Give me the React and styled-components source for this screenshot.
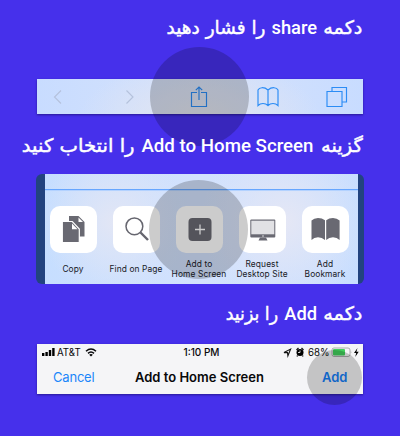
import React from "react";
import styled, { createGlobalStyle } from "styled-components";

const Global = createGlobalStyle`
  * { box-sizing: border-box; }
  body { margin: 0; background: #4630eb; }
`;

const Page = styled.main`
  display: flex;
  flex-direction: column;
  width: 400px;
  height: 436px;
  overflow: hidden;
  background: #4630eb;
  font-family: Inter, "Liberation Sans", sans-serif;
`;

const Heading = styled.h2`
  position: relative;
  z-index: 2;
  display: flex;
  justify-content: flex-start;
  align-items: center;
  direction: rtl;
  height: 30px;
  margin: ${(p) => p.$top}px 37px 0 0;
  color: #fff;
  font: 400 18.5px/30px "DejaVu Sans", sans-serif;
  white-space: nowrap;
`;

const Persian = styled.span`
  flex: none;
  display: flex;
  justify-content: center;
  width: ${(p) => p.$w}px;
  -webkit-text-stroke: 0.45px #fff;
`;

const Latin = styled.span`
  flex: none;
  display: flex;
  justify-content: center;
  width: ${(p) => p.$w}px;
  direction: ltr;
  margin: 0 6px;
  font: 500 18.7px/30px Roboto, sans-serif;
`;

const Stretch = styled.span`
  flex: none;
  transform: scaleX(${(p) => p.$by || 1});
`;

const Halo = styled.i`
  position: absolute;
  z-index: 1;
  left: ${(p) => p.$x}px;
  top: ${(p) => p.$y}px;
  width: ${(p) => p.$size}px;
  height: ${(p) => p.$size}px;
  border-radius: 50%;
  background: rgba(0, 0, 0, 0.2);
  pointer-events: none;
`;

const Toolbar = styled.section`
  position: relative;
  flex: none;
  display: flex;
  align-items: center;
  width: 326px;
  height: 35px;
  margin: 36px 0 0 37px;
  background:
    radial-gradient(ellipse 120px 50px at 50% 100%, #e2e5f0, rgba(226, 229, 240, 0)),
    linear-gradient(90deg, #c8dcff, #d6e2fb 50%, #c8dcff);
  box-shadow: 0 1px 2px rgba(20, 10, 90, 0.6);
`;

const ToolIcon = styled.svg`
  flex: none;
  width: 24px;
  height: 24px;
  margin-left: ${(p) => p.$gap}px;
  fill: none;
  stroke: ${(p) => (p.$muted ? "#b5c2dc" : "#2b8cf5")};
  stroke-width: 1.15;
`;

const Sheet = styled.section`
  position: relative;
  flex: none;
  width: 328px;
  height: 110px;
  margin: 13px 0 0 36px;
  padding: 0 6px 0 9px;
  border-radius: 6px;
  background: #22437f;
`;

const SheetBody = styled.div`
  height: 110px;
  padding-top: 15px;
  background:
    radial-gradient(circle 75px at 69px 48px, #e2e6f5, rgba(226, 230, 245, 0)),
    radial-gradient(circle 85px at 240px 48px, #e5e7f5, rgba(229, 231, 245, 0)),
    linear-gradient(90deg, #c6deff, #d3e2fd 50%, #c8deff);
`;

const Rule = styled.div`
  height: 1px;
  background: #66a6ff;
  box-shadow: 0 1px 0 #b3d2ff;
`;

const Actions = styled.div`
  display: grid;
  grid-template-columns: repeat(5, 63px);
  margin: 16px 0 0 -3.5px;
`;

const Action = styled.div`
  display: flex;
  flex-direction: column;
  align-items: center;
`;

const Tile = styled.div`
  display: flex;
  align-items: center;
  justify-content: center;
  width: 47px;
  height: 47px;
  border-radius: 10px;
  background: #fff;
`;

const Glyph = styled.svg`
  width: 47px;
  height: 47px;
  fill: #696972;
`;

const Label = styled.div`
  display: flex;
  align-items: center;
  height: 22px;
  margin-top: 5px;
  color: #17191f;
  font-size: 8.4px;
  line-height: 10.2px;
  letter-spacing: 0.1px;
  text-align: center;
  white-space: pre;
`;

const Dialog = styled.section`
  position: relative;
  flex: none;
  width: 326px;
  height: 50px;
  margin: 15px 0 0 37px;
  background: #f5f5f7;
  color: #08080a;
  box-shadow: 0 1px 2px rgba(20, 10, 90, 0.6);
`;

const StatusBar = styled.div`
  display: grid;
  grid-template-columns: 146.5px 99.5px 80px;
  height: 17px;
  font-size: 9.7px;
  line-height: 17px;
`;

const StatusIcons = styled.svg`
  flex: none;
  width: ${(p) => p.$w}px;
  height: 17px;
`;

const Carrier = styled.div`
  display: flex;
  padding-left: 5px;
  white-space: pre;
`;

const Clock = styled.div`
  font-size: 10px;
  font-weight: 500;
`;

const Battery = styled.div`
  display: flex;
`;

const NavBar = styled.div`
  display: grid;
  grid-template-columns: 98px 187px 41px;
  height: 33px;
  font-size: 13px;
  line-height: 33px;
  white-space: nowrap;
`;

const Cancel = styled.span`
  padding-left: 16px;
  color: #1b86fa;
  letter-spacing: -0.2px;
`;

const Title = styled.span`
  font-weight: 600;
`;

const Confirm = styled.span`
  color: #1580fa;
  font-weight: 600;
`;

const glyphs = {
  copy: (
    <>
      <path d="M20 10h8.5l6 6v14.5H19V10z" />
      <path d="M28.5 11.5V16H33z" fill="#fff" />
      <path d="M12.3 15.5h10l7 7.5v13.5h-17z" stroke="#fff" strokeWidth="1.2" />
      <path d="M22 17.5v5.7h5.5z" fill="#fff" />
    </>
  ),
  find: (
    <g fill="none" stroke="#66666f">
      <circle cx="21.4" cy="20.3" r="8.4" strokeWidth="1.5" />
      <path d="M27.5 26.5l7.5 7.5" strokeWidth="2.4" />
    </g>
  ),
  add: (
    <>
      <rect x="12.5" y="12" width="23" height="23" rx="4" />
      <path d="M24 18.5v10M19 23.5h10" stroke="#fff" strokeWidth="1.3" />
    </>
  ),
  desktop: (
    <>
      <rect x="11.3" y="13.5" width="25" height="18" rx="1" />
      <path d="M12.3 14.7h23v13.6h-23z" fill="#e1e1e4" />
      <path d="M21 31.5h6l1.5 3h-9z" />
      <circle cx="24" cy="30" r=".7" fill="#fff" />
    </>
  ),
  bookmark: (
    <path d="M9.5 14.5Q12 12 16 12t7 2.3V34Q20 31.3 16 31.3T9.5 34zM24.2 14.3Q27 12 31 12t6.6 2.5V34Q35 31.3 31 31.3T24.2 34z" />
  ),
};

const actions = [
  ["copy", "Copy"],
  ["find", "Find on Page"],
  ["add", "Add to\nHome Screen"],
  ["desktop", "Request\nDesktop Site"],
  ["bookmark", "Add\nBookmark"],
];

export default function App() {
  return (
    <>
      <Global />
      <Page>
        <Heading $top={13}>
          <Persian $w={40}><Stretch $by={1.04}>دکمه</Stretch></Persian>
          <Latin $w={46}><Stretch $by={0.98}>share</Stretch></Latin>
          <Persian $w={98}><Stretch>را فشار دهید</Stretch></Persian>
        </Heading>
        <Toolbar>
          <ToolIcon $gap={9} $muted viewBox="0 0 24 24"><path d="M15 5.5L8.5 12l6.5 6.5" /></ToolIcon>
          <ToolIcon $gap={48} $muted viewBox="0 0 24 24"><path d="M8.5 5.5L15 12l-6.5 6.5" /></ToolIcon>
          <ToolIcon $gap={45} viewBox="0 0 24 24">
            <path d="M10 7.5H4.5v14h15v-14H14M12 15V2M8.8 5.2L12 2l3.2 3.2" />
          </ToolIcon>
          <ToolIcon $gap={45} viewBox="0 0 24 24">
            <path d="M12 5Q9 2.5 6 2.7T2 5v15.5q2-2 5-2t5 2.2q2-2.2 5-2.2t5 2V5q-1-2.1-4-2.3T12 5zM12 5v16" />
          </ToolIcon>
          <ToolIcon $gap={45} viewBox="0 0 24 24">
            <path d="M2 6.5h15v15H2zM7 6.5v-4h14.5V17H17" />
          </ToolIcon>
          <Halo $x={113} $y={-32} $size={99} />
        </Toolbar>
        <Heading $top={17}>
          <Persian $w={43}><Stretch $by={1.05}>گزینه</Stretch></Persian>
          <Latin $w={173}><Stretch>Add to Home Screen</Stretch></Latin>
          <Persian $w={113}><Stretch $by={1.06}>را انتخاب کنید</Stretch></Persian>
        </Heading>
        <Sheet>
          <SheetBody>
            <Rule />
            <Actions>
              {actions.map(([id, text]) => (
                <Action key={id}>
                  <Tile><Glyph viewBox="0 0 47 47">{glyphs[id]}</Glyph></Tile>
                  <Label>{text}</Label>
                </Action>
              ))}
            </Actions>
          </SheetBody>
          <Halo $x={113} $y={6} $size={99} />
        </Sheet>
        <Heading $top={15}>
          <Persian $w={40}><Stretch $by={1.04}>دکمه</Stretch></Persian>
          <Latin $w={33}><Stretch $by={0.98}>Add</Stretch></Latin>
          <Persian $w={52}><Stretch $by={0.94}>را بزنید</Stretch></Persian>
        </Heading>
        <Dialog>
          <StatusBar>
            <Carrier>
              <StatusIcons $w={15} viewBox="0 0 15 17">
                <path d="M0 9h2.4v3H0zM3.4 8h2.4v4H3.4zM6.8 6h2.4v6H6.8zM10.2 4h2.4v8h-2.4z" />
              </StatusIcons>
              AT&amp;T
              <StatusIcons $w={20} viewBox="0 0 20 17">
                <g fill="none" stroke="#08080a" strokeWidth="1.5">
                  <path d="M5 7.2q5-4.4 10 0M7 9.4q3-2.8 6 0" />
                </g>
                <path d="M8.2 10.7q1.8-1.6 3.6 0L10 12.5z" />
              </StatusIcons>
            </Carrier>
            <Clock>1:10 PM</Clock>
            <Battery>
              <StatusIcons $w={25} viewBox="0 0 25 17">
                <path d="M1 8.6l6.6-3.5L4.9 11.8l-.4-3.2z" fill="none" stroke="#111" strokeWidth="1.1" />
                <circle cx="17" cy="8.5" r="3.5" />
                <path d="M13.5 6l2-2M18.5 4l2 2M14.5 11.5L14 12.5M19.5 11.5l.5 1" stroke="#111" strokeWidth="1.3" />
                <path d="M17 6.5v2h-2" fill="none" stroke="#fff" strokeWidth=".8" />
              </StatusIcons>
              68%
              <StatusIcons $w={30} viewBox="0 0 30 17">
                <rect x="2" y="4" width="18" height="8.5" rx="2" fill="none" stroke="#999" strokeWidth=".8" />
                <rect x="3" y="5" width="12" height="6.5" rx="1" fill="#43d15d" />
                <path d="M20.8 7q1.3 1 0 2.5z" fill="#999" />
                <path d="M27.5 4L24 9h2.2l-1 4 3.5-5.2h-2.3z" />
              </StatusIcons>
            </Battery>
          </StatusBar>
          <NavBar>
            <Cancel>Cancel</Cancel>
            <Title>Add to Home Screen</Title>
            <Confirm>Add</Confirm>
          </NavBar>
          <Halo $x={270} $y={6} $size={55} />
        </Dialog>
      </Page>
    </>
  );
}
